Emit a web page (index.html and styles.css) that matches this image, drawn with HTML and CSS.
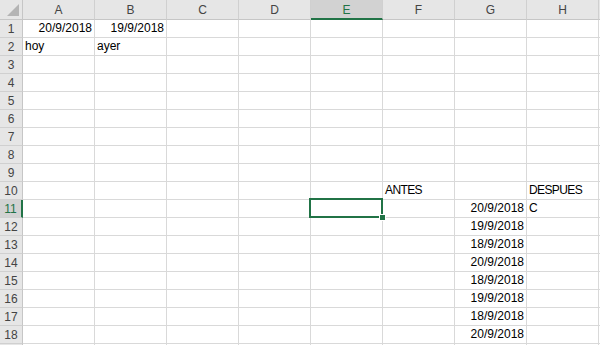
FILE: index.html
```html
<!DOCTYPE html>
<html lang="es">
<head>
    <meta charset="UTF-8">
    <title>Libro1 - Excel</title>
    <link rel="stylesheet" href="styles.css">
</head>
<body>
    <div class="sheet">
        <div class="r">
            <div class="corner"><span class="tri"></span></div>
            <div class="ch">A</div><div class="ch">B</div><div class="ch">C</div><div class="ch">D</div>
            <div class="ch sel">E</div><div class="ch">F</div><div class="ch">G</div><div class="ch">H</div><div class="ch"></div>
        </div>
        <div class="r">
            <div class="rh">1</div>
            <div class="c num">20/9/2018</div><div class="c num">19/9/2018</div><div class="c"></div><div class="c"></div>
            <div class="c"></div><div class="c"></div><div class="c"></div><div class="c"></div><div class="c"></div>
        </div>
        <div class="r">
            <div class="rh">2</div>
            <div class="c">hoy</div><div class="c">ayer</div><div class="c"></div><div class="c"></div>
            <div class="c"></div><div class="c"></div><div class="c"></div><div class="c"></div><div class="c"></div>
        </div>
        <div class="r">
            <div class="rh">3</div>
            <div class="c"></div><div class="c"></div><div class="c"></div><div class="c"></div>
            <div class="c"></div><div class="c"></div><div class="c"></div><div class="c"></div><div class="c"></div>
        </div>
        <div class="r">
            <div class="rh">4</div>
            <div class="c"></div><div class="c"></div><div class="c"></div><div class="c"></div>
            <div class="c"></div><div class="c"></div><div class="c"></div><div class="c"></div><div class="c"></div>
        </div>
        <div class="r">
            <div class="rh">5</div>
            <div class="c"></div><div class="c"></div><div class="c"></div><div class="c"></div>
            <div class="c"></div><div class="c"></div><div class="c"></div><div class="c"></div><div class="c"></div>
        </div>
        <div class="r">
            <div class="rh">6</div>
            <div class="c"></div><div class="c"></div><div class="c"></div><div class="c"></div>
            <div class="c"></div><div class="c"></div><div class="c"></div><div class="c"></div><div class="c"></div>
        </div>
        <div class="r">
            <div class="rh">7</div>
            <div class="c"></div><div class="c"></div><div class="c"></div><div class="c"></div>
            <div class="c"></div><div class="c"></div><div class="c"></div><div class="c"></div><div class="c"></div>
        </div>
        <div class="r">
            <div class="rh">8</div>
            <div class="c"></div><div class="c"></div><div class="c"></div><div class="c"></div>
            <div class="c"></div><div class="c"></div><div class="c"></div><div class="c"></div><div class="c"></div>
        </div>
        <div class="r">
            <div class="rh">9</div>
            <div class="c"></div><div class="c"></div><div class="c"></div><div class="c"></div>
            <div class="c"></div><div class="c"></div><div class="c"></div><div class="c"></div><div class="c"></div>
        </div>
        <div class="r">
            <div class="rh">10</div>
            <div class="c"></div><div class="c"></div><div class="c"></div><div class="c"></div>
            <div class="c"></div><div class="c txt">ANTES</div><div class="c"></div><div class="c txt">DESPUES</div><div class="c"></div>
        </div>
        <div class="r">
            <div class="rh sel">11</div>
            <div class="c"></div><div class="c"></div><div class="c"></div><div class="c"></div>
            <div class="c active"><span class="cursor"><span class="handle"></span></span></div>
            <div class="c"></div><div class="c num">20/9/2018</div><div class="c">C</div><div class="c"></div>
        </div>
        <div class="r">
            <div class="rh">12</div>
            <div class="c"></div><div class="c"></div><div class="c"></div><div class="c"></div>
            <div class="c"></div><div class="c"></div><div class="c num">19/9/2018</div><div class="c"></div><div class="c"></div>
        </div>
        <div class="r">
            <div class="rh">13</div>
            <div class="c"></div><div class="c"></div><div class="c"></div><div class="c"></div>
            <div class="c"></div><div class="c"></div><div class="c num">18/9/2018</div><div class="c"></div><div class="c"></div>
        </div>
        <div class="r">
            <div class="rh">14</div>
            <div class="c"></div><div class="c"></div><div class="c"></div><div class="c"></div>
            <div class="c"></div><div class="c"></div><div class="c num">20/9/2018</div><div class="c"></div><div class="c"></div>
        </div>
        <div class="r">
            <div class="rh">15</div>
            <div class="c"></div><div class="c"></div><div class="c"></div><div class="c"></div>
            <div class="c"></div><div class="c"></div><div class="c num">18/9/2018</div><div class="c"></div><div class="c"></div>
        </div>
        <div class="r">
            <div class="rh">16</div>
            <div class="c"></div><div class="c"></div><div class="c"></div><div class="c"></div>
            <div class="c"></div><div class="c"></div><div class="c num">19/9/2018</div><div class="c"></div><div class="c"></div>
        </div>
        <div class="r">
            <div class="rh">17</div>
            <div class="c"></div><div class="c"></div><div class="c"></div><div class="c"></div>
            <div class="c"></div><div class="c"></div><div class="c num">18/9/2018</div><div class="c"></div><div class="c"></div>
        </div>
        <div class="r">
            <div class="rh">18</div>
            <div class="c"></div><div class="c"></div><div class="c"></div><div class="c"></div>
            <div class="c"></div><div class="c"></div><div class="c num">20/9/2018</div><div class="c"></div><div class="c"></div>
        </div>
        <div class="r">
            <div class="rh"></div>
            <div class="c"></div><div class="c"></div><div class="c"></div><div class="c"></div>
            <div class="c"></div><div class="c"></div><div class="c"></div><div class="c"></div><div class="c"></div>
        </div>
    </div>
</body>
</html>
```

FILE: styles.css
```css
* {
    margin: 0;
    padding: 0;
    box-sizing: border-box;
}

html, body {
    width: 600px;
    height: 345px;
    overflow: hidden;
    background: #fff;
}

body {
    font-family: 'Liberation Sans', Arial, sans-serif;
    font-size: 12px;
    color: #000;
}

.sheet {
    display: grid;
    grid-template-columns: 23px repeat(9, 72px);
    grid-template-rows: 20px;
    grid-auto-rows: 18px;
}

.r {
    display: contents;
}

/* column + row headers */
.corner,
.ch,
.rh {
    background: #e6e6e6;
    color: #444;
    border-right: 1px solid #c6c6c6;
    border-bottom: 1px solid #c6c6c6;
    display: flex;
    align-items: center;
    justify-content: center;
}

.corner {
    position: relative;
}

.tri {
    position: absolute;
    right: 3px;
    bottom: 3px;
    width: 0;
    height: 0;
    border-left: 12px solid transparent;
    border-bottom: 12px solid #b4b4b4;
}

.ch {
    border-right-color: #d0d0d0;
    padding-top: 1px;
}

.rh {
    border-bottom-color: #d0d0d0;
}

.ch.sel {
    background: #d2d2d2;
    color: #217346;
    border-bottom: 2px solid #217346;
}

.rh.sel {
    background: #d2d2d2;
    color: #217346;
    border-right: 2px solid #217346;
}

/* cells */
.c {
    border-right: 1px solid #d9d9d9;
    border-bottom: 1px solid #d9d9d9;
    padding: 0 2px 2px;
    display: flex;
    align-items: flex-end;
    white-space: nowrap;
    line-height: 14px;
}

.c.num {
    justify-content: flex-end;
}

.c.txt {
    letter-spacing: -0.6px;
}

.c.active {
    position: relative;
}

.cursor {
    position: absolute;
    left: -2px;
    top: -2px;
    right: -1px;
    bottom: -1px;
    border: 2px solid #217346;
}

.handle {
    position: absolute;
    right: -5px;
    bottom: -5px;
    width: 7px;
    height: 7px;
    background: #217346;
    border: 1px solid #fff;
}
```
